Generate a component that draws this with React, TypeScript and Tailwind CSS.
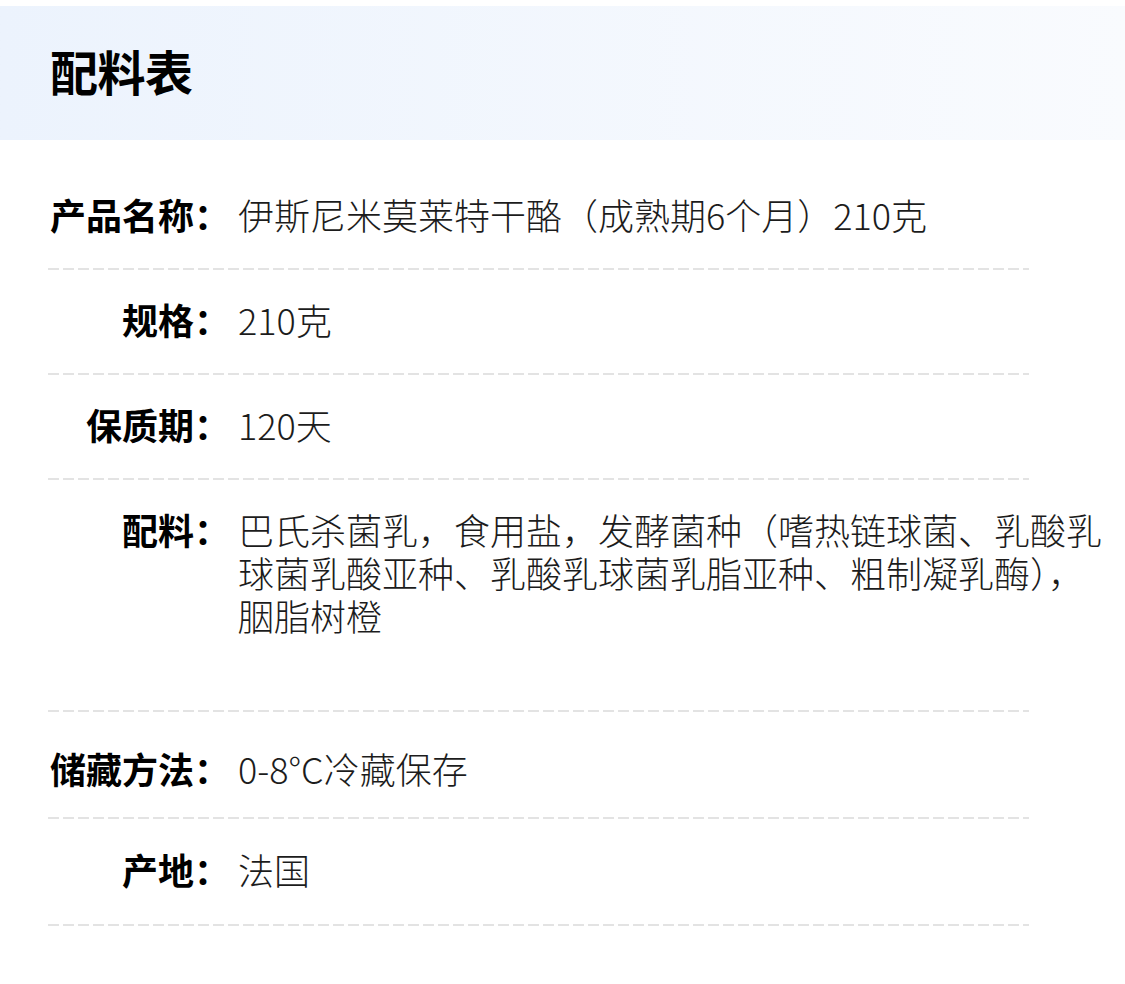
import React from "react";

const rows: { label: string; value: React.ReactNode; cls: string }[] = [
  { label: "产品名称：", value: "伊斯尼米莫莱特干酪（成熟期6个月）210克", cls: "pt-[28px] pb-[32px]" },
  { label: "规格：", value: "210克", cls: "pt-[28px] pb-[32px]" },
  { label: "保质期：", value: "120天", cls: "pt-[28px] pb-[32px]" },
  {
    label: "配料：",
    value: "巴氏杀菌乳，食用盐，发酵菌种（嗜热链球菌、乳酸乳球菌乳酸亚种、乳酸乳球菌乳脂亚种、粗制凝乳酶），胭脂树橙",
    cls: "pt-[28px] pb-[73px]",
  },
  { label: "储藏方法：", value: "0-8°C冷藏保存", cls: "pt-[35px] pb-[27px]" },
  { label: "产地：", value: "法国", cls: "pt-[29px] pb-[33px]" },
];

export default function App() {
  return (
    <div
      className="w-[1125px] min-h-[984px] bg-white pt-[6px] text-black"
      style={{ fontFamily: '"Noto Sans CJK SC", "Noto Sans", sans-serif' }}
    >
      <div className="h-[134px] bg-gradient-to-r from-[#ecf3fd] to-[#f9fbfe] flex items-center pl-[50px] pb-[6px]">
        <h1 className="text-[48px] font-bold leading-none tracking-[-0.5px]">配料表</h1>
      </div>
      <div className="mt-[25px]">
        {rows.map((r) => (
          <div key={r.label}>
            <div className={`flex ${r.cls}`}>
              <div className="w-[230px] shrink-0 text-right text-[36px] leading-[43px] font-bold text-black">
                {r.label}
              </div>
              <div className="ml-[8px] w-[877px] text-[36px] leading-[43px] font-light text-[#1c1c1c]">
                {r.value}
              </div>
            </div>
            <div className="ml-[48px] w-[981px] h-[2px] bg-[repeating-linear-gradient(to_right,#e3e3e3_0px,#e3e3e3_11px,transparent_11px,transparent_15px)]" />
          </div>
        ))}
      </div>
    </div>
  );
}
